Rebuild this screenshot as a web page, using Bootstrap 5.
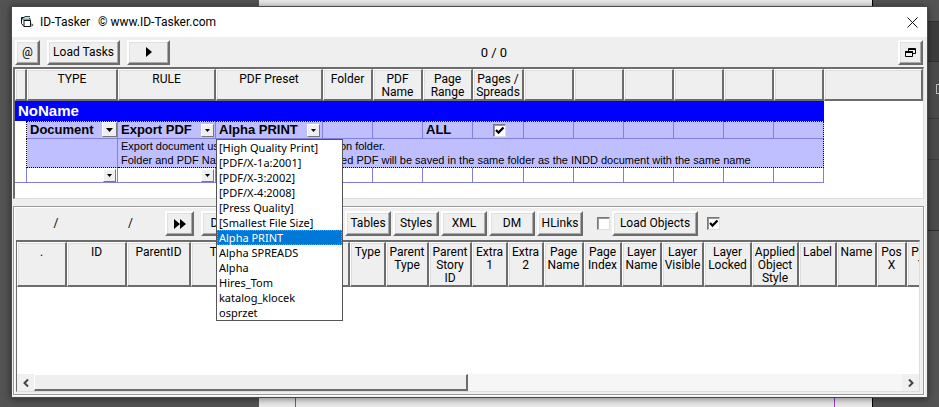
<!DOCTYPE html>
<html lang="en"><head><meta charset="utf-8"><title>ID-Tasker</title>
<meta name="viewport" content="width=device-width, initial-scale=1">
<link href="https://cdn.jsdelivr.net/npm/bootstrap@5.3.0/dist/css/bootstrap.min.css" rel="stylesheet">
<style>
body{background:#535353;font:12px/13px Roboto,"Liberation Sans",sans-serif;color:#000;min-height:100vh;overflow:hidden;display:flex}
/* host application behind the dialog */
.canvas-page{left:259px;right:66px;background:#e9e9e9;border-right:1px solid #000}
.canvas-margin{left:36px;right:37px;border:solid #9340c0;border-width:0 1px;height:50%}
.host-strip{right:0;width:11px;background:linear-gradient(#535353 21px,#333 21px 22px,#3d3d3d 22px 61px,#303030 61px 62px,#4b4b4b 62px 118px,#3c3c3c 118px 119px,#4b4b4b 119px 159px,#3c3c3c 159px 160px,#4b4b4b 160px 230px,#2c2c2c 230px 231px,#535353 231px)}
.host-strip svg{right:0;top:84px}
.dlg{margin:6px 11px 9px;border:1px solid #4a4a4a;background:#efefef;flex:1;min-width:0;z-index:1;box-shadow:0 1px 7px rgba(0,0,0,.5)}
.title-row{height:30px;background:#fff;padding:0 9px;line-height:16px}
.title-row button,.arrow-btn{border:0;background:none;padding:0}
.caption-gap{margin-left:6px}
.tools{height:30px;padding:0 4px 0 3px}
.counter{font-size:13px}
.grow-a{flex:31}.grow-b{flex:39}
.w-btn{background:#efefef;border:2px solid;border-color:#fff #6c6c6c #6c6c6c #fff;height:25px;padding:0 2px;color:#000;line-height:13px;box-shadow:inset -1px -1px #aaa,inset 1px 1px #e0e0e0;display:flex;align-items:center;justify-content:center;flex:none}
.w24{width:25px}.w28{width:29px}.w44{width:43px}.w46{width:46px}.w73{width:73px}.w86{width:86px}
.grid-a{margin:0 3px 0 1px;border:solid;border-width:2px 1px 1px 2px;border-color:#6c6c6c #ddd #ddd #6c6c6c;background:#fff;height:132px;overflow:hidden}
table{border-collapse:separate;border-spacing:0;table-layout:fixed;width:100%;line-height:13px}
th{font-weight:400;text-align:center;vertical-align:top;background:#efefef;border:solid;border-width:1px 2px 2px 1px;border-color:#fff #6c6c6c #6c6c6c #fff;box-shadow:inset 1px 1px #ddd;padding:3px 0 0;overflow:hidden;white-space:nowrap}
.grid-a th{height:32px}
td{padding:0}
.grid-a tbody{font-family:"Liberation Sans",Arial,sans-serif}
.group td{background:#00f;color:#fff;font-size:15px;font-weight:700;height:20px;padding:0 3px;line-height:20px}
.task td{height:18px;background:#bfbfff;border:solid #8080e0;border-width:0 1px 1px 0;border-top:1px dotted #000;font-size:13px;font-weight:700;line-height:16px;padding-left:3px;white-space:nowrap}
.task td.edge,.memo td.edge{background:#fff;border:0;border-right:1px dotted #000;padding:0}
.memo td{background:#bfbfff;height:28px;font-size:11px;line-height:14px;padding-left:3px;border-bottom:1px dotted #000;white-space:nowrap}
.memo td.note,.task td.fin{border-right:1px dotted #000}
.memo td.kind{border-right:1px solid #8080e0}
.blank td{height:15px;border:solid #8080e0;border-width:0 1px 1px 0}
.grid-a tbody td.off{background:#fff;border:0}
.pick{width:15px;height:15px;background:#efefef;border:1px solid;border-color:#fff #777 #777 #fff;padding:0;display:flex;align-items:center;justify-content:center;flex:none}
.pick.sm{width:13px;height:13px;margin-right:1px}
.preset-cell{padding-right:1px}
.tick{appearance:none;width:13px;height:13px;margin:0;border:1px solid;border-color:#777 #ddd #ddd #777;background:#fff;border-radius:0;flex:none;box-shadow:inset 1px 1px #999}
.task .tick{display:block;margin:0 auto}
.tick:checked{background:#fff url("data:image/svg+xml,%3Csvg xmlns='http://www.w3.org/2000/svg' viewBox='0 0 11 11'%3E%3Cpath d='M2 5l2.500 2.500L9.500 2.500' fill='none' stroke='%23000' stroke-width='2.300'/%3E%3C/svg%3E") center/11px no-repeat}
.lower{margin:7px 3px 2px 1px;border:1px solid #999;box-shadow:inset 1px 1px #fff,1px 1px #fff;padding:0 3px 2px 2px;flex:1;min-height:0}
.tools-b{height:33px;gap:2px}
.slot-a{width:80px}.slot-b{width:65px}
.gap5{margin-left:5px}
.gap7{margin-left:7px}
.gap12{margin-left:12px}
.covered{width:94px}
.grid-b{border:solid;border-width:2px 1px 1px 1px;border-color:#6c6c6c #ddd #ddd #6c6c6c;background:#fff;flex:1;min-height:0;overflow:hidden}
.grid-b table{width:920px}
.grid-b th{height:45px}
.scroll-row{height:17px;background:repeating-conic-gradient(#fff 0 25%,#ededed 0 50%) 0/2px 2px}
.arrow-btn{width:17px;background:#f0f0f0;display:flex;align-items:center;justify-content:center}
.thumb{width:50%;background:#efefef;border:solid;border-width:1px 2px 2px 1px;border-color:#fff #6c6c6c #6c6c6c #fff}
.preset-pop{left:216px;top:139px;width:127px;z-index:5;background:#fff;border:1px solid #555;font:11px/15px "Noto Sans",sans-serif}
.preset-pop button{border:0;background:none;color:#000;text-align:left;padding:0 2px;height:15px;white-space:nowrap;width:100%;display:block}
.preset-pop .on{background:#0078d7;color:#fff;outline:1px dotted #c98b4a;outline-offset:-1px}
</style>
<script src="https://cdn.jsdelivr.net/npm/bootstrap@5.3.0/dist/js/bootstrap.bundle.min.js"></script></head>
<body class="position-relative">
<div class="canvas-page position-absolute top-0 bottom-0"><div class="canvas-margin position-absolute bottom-0"></div></div>
<div class="host-strip position-absolute top-0 bottom-0"><svg class="position-absolute" width="3" height="11"><path d="M3 .5H.5V9M0 9.500H3" fill="none" stroke="#bbb"/></svg></div>
<main class="dlg d-flex flex-column">
<header class="title-row d-flex align-items-center">
<svg width="13" height="12" viewBox="0 0 13 12"><path d="M.5 1.500H3L4 .7H9M.5 1.500V7.500L3 10.500H9.500V4.500H3L.5 1.500M3 4.500V10.500M9.500 4.500L8.500 2" fill="#fff" stroke="#111"/><path d="M2 2.500h6.500l.7 1.500H3.200z" fill="#35b5c0"/><path d="M10.500 7l2 2-2 2z" fill="#555"/></svg>
<span class="caption-gap">ID-Tasker</span><span class="ms-2">© www.ID-Tasker.com</span>
<button class="ms-auto d-flex" aria-label="Close"><svg width="11" height="11"><path d="M.5 .5l10 10M10.500 .5l-10 10" stroke="#111" fill="none"/></svg></button></header>
<div class="tools d-flex align-items-center">
<button class="w-btn w24">@</button><button class="w-btn w73 gap7">Load Tasks</button><button class="w-btn w44 gap7" aria-label="Run"><svg width="6" height="10"><path d="M0 0l6 5-6 5z"/></svg></button>
<span class="grow-a"></span><span class="counter">0 / 0</span><span class="grow-b"></span>
<button class="w-btn w24" aria-label="Restore"><svg width="11" height="9"><path d="M3.500 3V.5H10.500V5.500H8M3 1.500H10.500M.5 4V8.500H7.500V4M0 4.500H8M0 3.500H8" fill="none" stroke="#000"/></svg></button></div>
<section class="grid-a"><table>
<colgroup><col style="width:12px"><col style="width:91px"><col style="width:98px"><col style="width:107px"><col style="width:50px"><col style="width:50px"><col style="width:50px"><col style="width:51px"><col style="width:50px"><col style="width:50px"><col style="width:50px"><col style="width:50px"><col style="width:50px"><col style="width:50px"><col></colgroup>
<thead><tr><th></th><th>TYPE</th><th>RULE</th><th>PDF Preset</th><th>Folder</th><th>PDF<br>Name</th><th>Page<br>Range</th><th>Pages /<br>Spreads</th><th></th><th></th><th></th><th></th><th></th><th></th><th></th></tr></thead>
<tbody><tr class="group"><td colspan="14">NoName</td><td class="off"></td></tr>
<tr class="task"><td class="edge"></td><td><div class="d-flex justify-content-between">Document<button class="pick" aria-label="Choose type"><svg width="7" height="4"><path d="M0 0h7L3.500 4z"/></svg></button></div></td><td><div class="d-flex justify-content-between align-items-center">Export PDF<button class="pick sm" aria-label="Choose rule"><svg width="5" height="3"><path d="M0 0h5L2.500 3z"/></svg></button></div></td><td class="preset-cell"><div class="d-flex justify-content-between align-items-center">Alpha PRINT<button class="pick sm" aria-label="Choose preset"><svg width="5" height="3"><path d="M0 0h5L2.500 3z"/></svg></button></div></td><td></td><td></td><td>ALL</td><td><input class="tick" type="checkbox" checked aria-label="Spreads"></td><td></td><td></td><td></td><td></td><td></td><td class="fin"></td><td class="off"></td></tr>
<tr class="memo"><td class="edge"></td><td class="kind"></td><td class="note" colspan="12">Export document using PDF Preset to selection folder.<br>Folder and PDF Name can be empty - specified PDF will be saved in the same folder as the INDD document with the same name</td><td class="off"></td></tr>
<tr class="blank"><td></td><td><button class="pick sm ms-auto" aria-label="New type"><svg width="5" height="3"><path d="M0 0h5L2.500 3z"/></svg></button></td><td><button class="pick sm ms-auto" aria-label="New rule"><svg width="5" height="3"><path d="M0 0h5L2.500 3z"/></svg></button></td><td></td><td></td><td></td><td></td><td></td><td></td><td></td><td></td><td></td><td></td><td></td><td class="off"></td></tr></tbody></table></section>
<section class="lower d-flex flex-column">
<div class="tools-b d-flex align-items-center">
<span class="slot-a text-center">/</span><span class="slot-b text-center">/</span><button class="w-btn w28" aria-label="Forward"><svg width="12" height="10"><path d="M0 0l6 5-6 5zM6 0l6 5-6 5z"/></svg></button>
<button class="w-btn w46 gap5">Docs</button><span class="covered"></span><button class="w-btn w46">Tables</button><button class="w-btn w46">Styles</button><button class="w-btn w46">XML</button><button class="w-btn w46">DM</button><button class="w-btn w46">HLinks</button>
<input class="tick gap12" type="checkbox" aria-label="Auto"><button class="w-btn w86">Load Objects</button><input class="tick gap7" type="checkbox" checked aria-label="Objects"></div>
<div class="grid-b d-flex flex-column"><table>
<colgroup><col style="width:50px"><col style="width:60px"><col style="width:64px"><col style="width:64px"><col style="width:95px"><col style="width:36px"><col style="width:43px"><col style="width:43px"><col style="width:36px"><col style="width:36px"><col style="width:40px"><col style="width:38px"><col style="width:40px"><col style="width:42px"><col style="width:48px"><col style="width:47px"><col style="width:38px"><col style="width:40px"><col style="width:30px"><col style="width:30px"></colgroup>
<thead><tr><th>.</th><th>ID</th><th>ParentID</th><th>Type</th><th></th><th>Type</th><th>Parent<br>Type</th><th>Parent<br>Story<br>ID</th><th>Extra<br>1</th><th>Extra<br>2</th><th>Page<br>Name</th><th>Page<br>Index</th><th>Layer<br>Name</th><th>Layer<br>Visible</th><th>Layer<br>Locked</th><th>Applied<br>Object<br>Style</th><th>Label</th><th>Name</th><th>Pos<br>X</th><th>Pos<br>Y</th></tr></thead></table>
<div class="scroll-row d-flex mt-auto"><button class="arrow-btn" aria-label="Scroll left"><svg width="6" height="8"><path d="M5 .5L1.500 4L5 7.500" fill="none" stroke="#444" stroke-width="2"/></svg></button><div class="flex-fill d-flex"><div class="thumb"></div></div><button class="arrow-btn" aria-label="Scroll right"><svg width="6" height="8"><path d="M1 .5L4.500 4L1 7.500" fill="none" stroke="#444" stroke-width="2"/></svg></button></div></div>
</section></main>
<div class="preset-pop position-absolute"><button>[High Quality Print]</button><button>[PDF/X-1a:2001]</button><button>[PDF/X-3:2002]</button><button>[PDF/X-4:2008]</button><button>[Press Quality]</button><button>[Smallest File Size]</button><button class="on">Alpha PRINT</button><button>Alpha SPREADS</button><button>Alpha</button><button>Hires_Tom</button><button>katalog_klocek</button><button>osprzet</button></div>
</body></html>
